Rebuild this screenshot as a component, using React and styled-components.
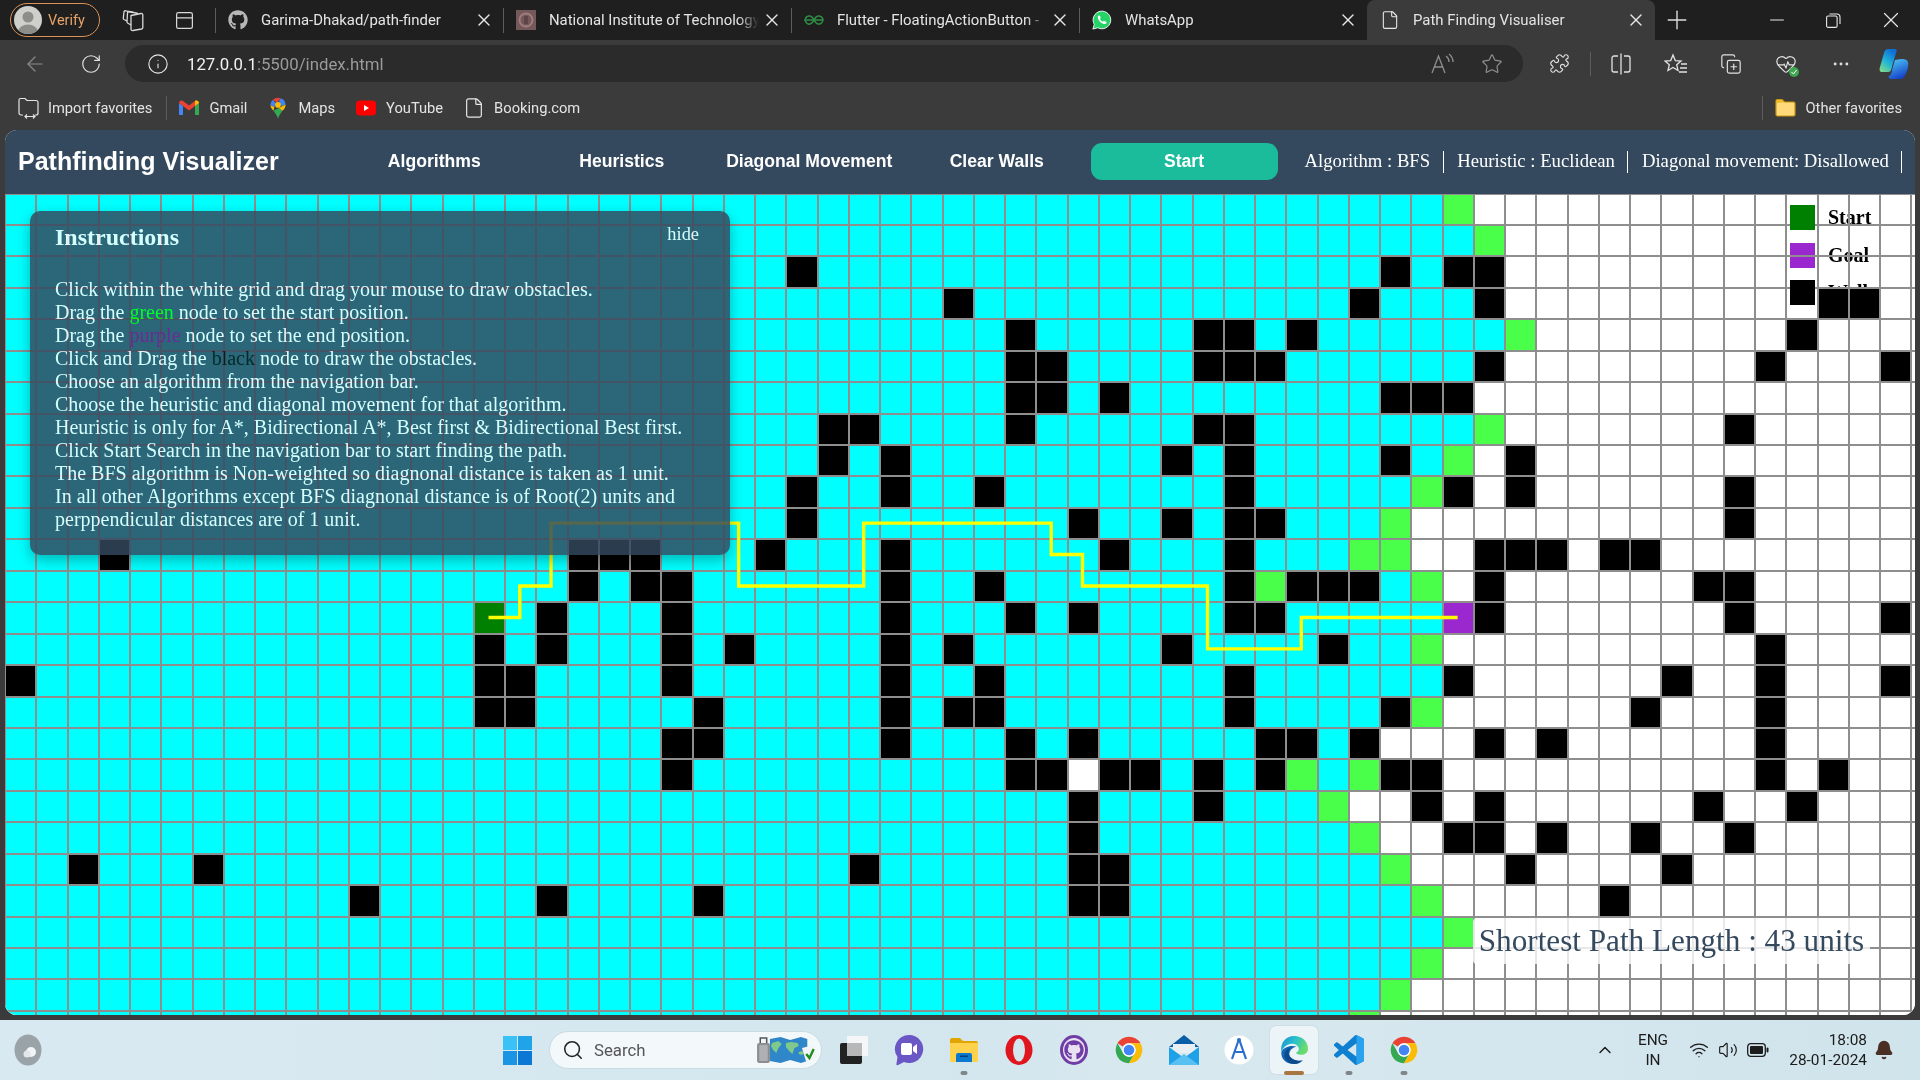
import React from "react";
import styled, { createGlobalStyle } from "styled-components";
import { FaGithub } from "react-icons/fa";
import {
  X, Plus, Minus, ArrowLeft, RotateCw, Info as InfoIcon, Star, Puzzle,
  Ellipsis, File, Search, ChevronUp, Wifi, Volume2, Bell, PanelTop, HeartPulse, CopyPlus,
} from "lucide-react";

const COL_W = 31.26;
const ROW_H = 31.44;

const WALLS = {
  2: [25, 44, 46, 47],
  3: [30, 43, 47, 58, 59],
  4: [32, 38, 39, 41, 57],
  5: [32, 33, 38, 39, 40, 47, 56, 60],
  6: [32, 33, 35, 44, 45, 46],
  7: [26, 27, 32, 38, 39, 55],
  8: [26, 28, 37, 39, 44, 48],
  9: [25, 28, 31, 39, 46, 48, 55],
  10: [25, 34, 37, 39, 40, 55],
  11: [3, 18, 19, 20, 24, 28, 35, 39, 47, 48, 49, 51, 52],
  12: [18, 20, 21, 28, 31, 39, 41, 42, 43, 47, 54, 55],
  13: [17, 21, 28, 32, 34, 39, 40, 47, 55, 60],
  14: [15, 17, 21, 23, 28, 30, 37, 42, 56],
  15: [0, 15, 16, 21, 28, 31, 39, 46, 53, 56, 60],
  16: [15, 16, 22, 28, 30, 31, 39, 44, 52, 56],
  17: [21, 22, 28, 32, 34, 40, 41, 43, 47, 49, 56],
  18: [21, 32, 33, 35, 36, 38, 40, 44, 45, 56, 58],
  19: [34, 38, 45, 47, 54, 57],
  20: [34, 46, 47, 49, 52, 55],
  21: [2, 6, 27, 34, 35, 48, 53],
  22: [11, 17, 22, 34, 35, 51],
};
const FRONTIER = {
  0: [46], 1: [47], 4: [48], 7: [47], 8: [46], 9: [45], 10: [44], 11: [43, 44], 12: [40, 45], 14: [45], 16: [45],
  18: [41, 43], 19: [42], 20: [43], 21: [44], 22: [45], 23: [46], 24: [45], 25: [44], 26: [43],
};
const WHITE_FROM = [47, 48, 48, 48, 49, 48, 47, 48, 47, 47, 45, 45, 46, 47, 46, 46, 46, 44, 46, 43, 44, 45, 46, 47, 46, 45, 44];

const kindOf = (r, c) => {
  if (r === 13 && c === 15) return "start";
  if (r === 13 && c === 46) return "goal";
  if ((WALLS[r] || []).includes(c)) return "wall";
  if ((FRONTIER[r] || []).includes(c)) return "frontier";
  if (r === 18 && c === 34) return "empty";
  return c >= WHITE_FROM[r] ? "empty" : "visited";
};
const CELLS = [];
for (let r = 0; r < 27; r++) for (let c = 0; c < 62; c++) CELLS.push({ id: `${r}-${c}`, kind: kindOf(r, c) });

const ROUTE = [[15,13],[16,13],[16,12],[17,12],[17,10],[23,10],[23,12],[27,12],[27,10],[33,10],[33,11],[34,11],[34,12],[38,12],[38,14],[41,14],[41,13],[46,13]];
const ROUTE_POINTS = ROUTE.map(([c, r]) => `${(c + 0.5) * COL_W - 1},${(r + 0.5) * ROW_H - 1}`).join(" ");

const CELL_BG = { visited: "#00ffff", frontier: "#4aff4a", wall: "#000", start: "#008000", goal: "#9b27cf", empty: "transparent" };

const Global = createGlobalStyle`
  html, body { margin: 0; padding: 0; width: 100%; height: 100%; overflow: hidden; background: #3b3b3b; }
  * { box-sizing: border-box; }
`;

const Shell = styled.div`
  width: 1920px; height: 1080px; display: flex; flex-direction: column; overflow: hidden;
  font-family: Roboto, "Noto Sans", sans-serif; background: #3b3b3b; filter: blur(0.3px);
`;

/* ---------- tab strip ---------- */
const TabStrip = styled.div`display: flex; height: 40px; background: #1f1f1f; align-items: stretch; flex: none;`;
const VerifyPill = styled.div`
  margin: 3px 0 3px 10px; width: 90px; height: 34px; border: 1px solid #d8935a; border-radius: 17px;
  display: flex; align-items: center; gap: 6px; padding-left: 3px; color: #e6a268; font-size: 14.5px;
`;
const Avatar = styled.div`
  width: 28px; height: 28px; border-radius: 50%; background: #cfcfcb; overflow: hidden; flex: none; display: flex;
`;
const StripButton = styled.div`
  width: 52px; display: flex; align-items: center; justify-content: center; color: #d8d8d8; flex: none;
  margin-left: ${(p) => p.$ml || 0}px;
`;
const Tab = styled.div`
  width: 288px; flex: none; display: flex; align-items: center; padding-left: 13px; position: relative;
  color: #e4e4e4; font-size: 14.9px;
  margin-left: ${(p) => p.$ml || 0}px;
  background: ${(p) => (p.$active ? "#3b3b3b" : "transparent")};
  border-radius: ${(p) => (p.$active ? "8px 8px 0 0" : "0")};
  &::before {
    content: ""; position: absolute; left: 0; top: 8px; bottom: 7px; width: 1px;
    background: ${(p) => (p.$active ? "transparent" : "#5c5c5c")};
  }
`;
const TabIcon = styled.div`width: 20px; height: 20px; display: flex; align-items: center; justify-content: center; flex: none;`;
const TabTitle = styled.div`
  margin-left: 13px; flex: 1; min-width: 0; white-space: nowrap; overflow: hidden;
  ${(p) => p.$fade && "mask-image: linear-gradient(90deg, #000 90%, transparent 100%);"}
`;
const TabClose = styled.div`
  width: 20px; margin: 0 9px 0 3px; display: flex; justify-content: center; color: #e8e8e8; flex: none;
`;
const NewTab = styled.div`width: 44px; display: flex; align-items: center; justify-content: center; color: #e0e0e0;`;
const WindowControls = styled.div`display: flex; margin-left: auto; padding-right: 1px;`;
const WindowButton = styled.div`width: 57px; display: flex; align-items: center; justify-content: center; color: #e8e8e8;`;

/* ---------- toolbar ---------- */
const Toolbar = styled.div`height: 42px; flex: none; display: flex; align-items: center; padding-left: 7px; background: #3b3b3b; padding-top: 5px;`;
const ToolSlot = styled.div`
  width: ${(p) => p.$w || 55}px; height: 37px; display: flex; align-items: center; justify-content: center;
  flex: none; color: ${(p) => p.$color || "#e2e2e2"};
`;
const AddressBar = styled.div`
  width: 1398.5px; height: 37px; margin: 0 9px 0 6.5px; border-radius: 19px; background: #2b2b2b; flex: none;
  display: flex; align-items: center; padding-left: 22px;
`;
const UrlInfo = styled.div`width: 22px; color: #e8e8e8; display: flex; justify-content: center; flex: none;`;
const UrlText = styled.div`margin-left: 18.5px; font-size: 16.8px; color: #9b9b9b; white-space: nowrap;`;
const UrlHost = styled.span`color: #f2f2f2;`;
const UrlActions = styled.div`margin-left: auto; display: flex; padding-right: 6px; color: #8f8f8f;`;
const UrlAction = styled.div`width: 50px; display: flex; justify-content: center;`;
const ToolDivider = styled.div`width: 1px; height: 24px; background: #5c5c5c; margin: 0 2px 0 3px; flex: none;`;

/* ---------- favorites ---------- */
const Favorites = styled.div`
  height: 48px; flex: none; display: flex; align-items: center; padding: 4px 18px 0 17px; background: #3b3b3b;
  font-size: 14.7px; color: #e4e4e4;
`;
const FavItem = styled.div`
  display: flex; align-items: center; gap: 9px; margin-right: 20px; white-space: nowrap;
  &:last-child { margin-right: 0; }
`;
const FavIcon = styled.div`width: 22px; height: 22px; flex: none; display: flex; align-items: center; justify-content: center;`;
const FavDivider = styled.div`width: 1px; height: 24px; background: #5c5c5c; margin: 0 11px 0 -6px; flex: none;`;
const FavRight = styled.div`margin-left: auto; display: flex; align-items: center;`;

/* ---------- page ---------- */
const PageFrame = styled.div`flex: 1; min-height: 0; padding: 0 5px 5px;`;
const Page = styled.div`
  width: 1910px; height: 885px; border-radius: 12px; overflow: hidden; background: #fff;
  display: flex; flex-direction: column; font-family: "Liberation Serif", serif;
`;
const NavBar = styled.nav`
  height: 63.5px; flex: none; display: flex; align-items: center; background: #34495e; color: #fff;
`;
const Brand = styled.div`
  width: 335.5px; padding-left: 13px; flex: none; font: bold 25px "Liberation Sans", sans-serif; padding-bottom: 1px;
`;
const NavLink = styled.div`
  width: 187.5px; flex: none; text-align: center; font: bold 17.6px "Liberation Sans", sans-serif;
`;
const StartButton = styled.div`
  width: 187px; height: 37px; flex: none; border-radius: 11px; background: #1abc9c; color: #fff;
  display: flex; align-items: center; justify-content: center; font: bold 17.6px "Liberation Sans", sans-serif;
`;
const InfoRow = styled.div`display: flex; margin-left: 27px; font-size: 18.7px; white-space: nowrap;`;
const InfoItem = styled.div`
  height: 22px; line-height: 20px; padding-right: 12.5px; margin-right: 13.5px; border-right: 1px solid #fff;
`;

const GridArea = styled.div`position: relative; flex: 1; min-height: 0; overflow: hidden; background: #fff;`;
const Grid = styled.div`
  position: relative; z-index: 1; display: grid;
  grid-template-columns: repeat(62, ${COL_W}px);
  grid-template-rows: repeat(27, ${ROW_H}px);
`;
const Cell = styled.div`
  border: 1px solid #8e8e8e; background: ${(p) => CELL_BG[p.$kind]};
`;
const Route = styled.svg`
  position: absolute; left: 0; top: 0; width: 100%; height: 100%; z-index: 2; pointer-events: none;
`;

const Legend = styled.div`
  position: absolute; left: 1785px; top: 11.5px; width: 110px; display: flex; flex-direction: column; gap: 12.5px;
`;
const LegendRow = styled.div`display: flex; align-items: center; gap: 13px; font-weight: bold; font-size: 20px; color: #000;`;
const Swatch = styled.div`
  width: 25px; height: 25px; flex: none; background: ${(p) => p.$color};
  ${(p) => p.$over && "position: relative; z-index: 2;"}
`;

const Panel = styled.section`
  position: absolute; left: 25px; top: 17.5px; width: 700px; height: 344px; z-index: 3; opacity: 0.83;
  background: #34495e; color: #fff; border-radius: 10px; padding: 12px 31px 0 25px;
  box-shadow: 0 5px 14px rgba(0, 0, 0, 0.35); font-size: 20px;
`;
const PanelHead = styled.div`display: flex; justify-content: space-between; height: 28px;`;
const PanelTitle = styled.div`font-size: 24px; font-weight: bold; line-height: 28px;`;
const HideLink = styled.div`line-height: 22px; font-size: 18.4px;`;
const PanelBody = styled.div`margin-top: 26.5px; line-height: 23px; width: 640px;`;
const Tint = styled.span`color: ${(p) => p.$color};`;

const Shortest = styled.div`
  position: absolute; left: 1468px; top: 724.5px; width: 397px; height: 46px; z-index: 3; border-radius: 4px;
  background: rgba(255, 255, 255, 0.8); color: #34495e; font-size: 31.2px;
  display: flex; align-items: center; justify-content: center; white-space: nowrap;
`;

/* ---------- taskbar ---------- */
const Taskbar = styled.div`
  height: 60px; flex: none; display: flex; align-items: stretch; color: #1c1c1c; padding-left: 0.5px;
  background: linear-gradient(90deg, #d9e9f1 0%, #d3e6ee 50%, #d8e8ef 60%, #d0e4ec 100%);
`;
const AppSlot = styled.div`
  width: 55px; flex: none; position: relative; display: flex; align-items: center; justify-content: center;
  margin-left: ${(p) => p.$ml || 0}px;
`;
const AppHighlight = styled.div`
  position: absolute; left: 3.5px; top: 6px; width: 48px; height: 48px; border-radius: 6px; background: #ecf4f8;
  box-shadow: 0 0 2px rgba(0, 0, 0, 0.12);
`;
const AppIcon = styled.div`position: relative; display: flex; width: 32px; height: 32px; align-items: center; justify-content: center;`;
const AppDot = styled.div`
  position: absolute; left: 50%; bottom: 5px; transform: translateX(-50%); height: 4px; border-radius: 2px;
  width: ${(p) => (p.$active ? 20 : 7)}px; background: ${(p) => (p.$active ? "#a8763f" : "#7f8589")};
`;
const SearchBox = styled.div`
  width: 273px; height: 38.5px; margin: 10.5px 4.5px 0 4px; flex: none; border-radius: 20px; background: #f3f8fb;
  border: 1px solid #c9dbe3; display: flex; align-items: center; padding: 0 3px 0 12px; font-size: 16.8px; color: #555;
`;
const SearchLabel = styled.div`margin-left: 10px; flex: 1;`;
const Tray = styled.div`margin-left: auto; margin-right: 20px; display: flex; align-items: center; font-size: 15.4px;`;
const TraySlot = styled.div`
  width: ${(p) => p.$w}px; display: flex; justify-content: center; align-items: center; flex: none;
`;
const Lang = styled.div`width: 60px; text-align: center; line-height: 20px; flex: none;`;
const Clock = styled.div`width: 93px; text-align: right; line-height: 20px; flex: none;`;

/* ---------- drawn logos ---------- */
const Chrome = ({ size = 32 }) => (
  <svg width={size} height={size} viewBox="0 0 48 48">
    <path fill="#ea4335" d="M24 4A20 20 0 0 1 41.32 14H24A10 10 0 0 0 15.34 19L6.68 14A20 20 0 0 1 24 4Z" />
    <path fill="#34a853" d="M6.68 14A20 20 0 0 0 24 44L32.66 29A10 10 0 0 1 15.34 29Z" />
    <path fill="#fbbc05" d="M41.32 14A20 20 0 0 1 24 44L32.66 29A10 10 0 0 0 24 14Z" />
    <circle cx="24" cy="24" r="10" fill="#fff" />
    <circle cx="24" cy="24" r="8" fill="#4285f4" />
  </svg>
);
const Edge = () => (
  <svg width="32" height="32" viewBox="0 0 48 48">
    <defs>
      <linearGradient id="edgeA" x1="0" y1="0" x2="1" y2="0.4">
        <stop offset="0" stopColor="#1b8fd8" />
        <stop offset="0.55" stopColor="#2cc3c9" />
        <stop offset="1" stopColor="#6bdc6a" />
      </linearGradient>
    </defs>
    <path fill="url(#edgeA)" d="M24 3c12 0 21 8 21 19 0 6-5 9-10 9-4 0-7-1-8-3 3-1 5-4 4-7-2-5-7-7-12-6C12 16 7 21 5 27 3 13 12 3 24 3Z" />
    <path fill="#1266b5" d="M5 27c-1 11 8 18 19 18 5 0 10-2 13-5-6 3-13 2-17-3-5-5-3-12 1-15 2-2 5-3 7-3-9-3-20 1-23 8Z" />
    <path fill="#0b4a8c" d="M19 20c-4 5-4 11 0 15 5 5 12 6 18 4-4 4-8 6-13 6-6 0-12-4-14-10-2-6 3-13 9-15Z" />
  </svg>
);
const VsCode = () => (
  <svg width="30" height="30" viewBox="0 0 24 24">
    <path fill="#0f7fcf" d="M23.15 2.587L18.21.21a1.494 1.494 0 0 0-1.705.29l-9.46 8.63-4.12-3.128a.999.999 0 0 0-1.276.057L.327 7.261A1 1 0 0 0 .326 8.74L3.899 12 .326 15.26a1 1 0 0 0 .001 1.479L1.65 17.94a.999.999 0 0 0 1.276.057l4.12-3.128 9.46 8.63a1.492 1.492 0 0 0 1.704.29l4.942-2.377A1.5 1.5 0 0 0 24 20.06V3.939a1.5 1.5 0 0 0-.85-1.352zm-5.146 14.861L10.826 12l7.178-5.448v10.896z" />
    <path fill="#2aa3ee" d="M18 .35c.1 0 .15-.1.21-.14l4.94 2.377A1.5 1.5 0 0 1 24 3.94v16.12a1.5 1.5 0 0 1-.85 1.352l-4.94 2.377a1.5 1.5 0 0 1-.21.08V17.45V6.55Z" />
  </svg>
);
const Folder = () => (
  <svg width="30" height="30" viewBox="0 0 30 30">
    <path fill="#e0a500" d="M1 5a2 2 0 0 1 2-2h8l3 3h13a2 2 0 0 1 2 2v3H1Z" />
    <path fill="#ffd24d" d="M1 8h28v18a1 1 0 0 1-1 1H2a1 1 0 0 1-1-1Z" />
    <path fill="#0a7ad1" d="M7 20a2 2 0 0 1 2-2h12a2 2 0 0 1 2 2v7H7Z" />
    <rect x="11" y="20.5" width="8" height="1.5" fill="#073f7a" />
  </svg>
);
const FavFolder = () => (
  <svg width="21" height="20" viewBox="0 0 21 20">
    <path fill="#ffd97a" stroke="#c8960c" strokeWidth="1.200" d="M1 3a1.500 1.500 0 0 1 1.500-1.500H7L9.500 4h9A1.500 1.500 0 0 1 20 5.500v11a1.500 1.500 0 0 1-1.500 1.500h-16A1.500 1.500 0 0 1 1 16.500Z" />
    <path fill="#f0b71f" d="M1.600 2.200H7L9 4.300l-7.400.6Z" />
  </svg>
);
const MapArt = () => (
  <svg width="62" height="32" viewBox="0 0 58 32" preserveAspectRatio="none">
    <rect x="1" y="9" width="12" height="20" rx="2" fill="#8b8d8f" />
    <rect x="3" y="11" width="8" height="16" rx="1" fill="#aeb0b2" />
    <path d="M4 9V4h6v5" fill="none" stroke="#555" strokeWidth="1.4" />
    <path fill="#2f86c9" d="M13 5l10-2 9 3 10-3 6 2v22l-6 2-10-3-9 3-10-2Z" />
    <path fill="#7fc98a" d="M15 9l6-2 3 3-3 4-2 5-3-3-2-4ZM28 9l5-1 6 1 1 3-4 2-2 6-3-3-3-4ZM40 18l3-1 2 2-2 2-3-1Z" />
    <path fill="#f3f4f7" d="M43 14l11-3 3 13-10 4Z" />
    <path d="M47 20l3 4 4-9" fill="none" stroke="#1d8f1d" strokeWidth="2.2" />
  </svg>
);
const GmailMark = () => (
  <svg width="20" height="16" viewBox="0 0 20 16">
    <path fill="#4285f4" d="M0 3v12h4V6Z" />
    <path fill="#34a853" d="M16 6v9h4V3Z" />
    <path fill="#ea4335" d="M0 3c0-2 2.5-3 4-2l6 4.5L16 1c1.500-1 4 0 4 2l-4 3-6 4.500L4 6Z" />
    <path fill="#fbbc05" d="M16 1c1.500-1 4 0 4 2l-4 3Z" />
  </svg>
);
const MapsMark = () => (
  <svg width="16" height="24" viewBox="0 0 18 24">
    <path fill="#34a853" d="M4 15c2 3 4 5 5 9 1-4 3-6 5-9l-4-3Z" />
    <path fill="#ea4335" d="M3 3a8.600 8.600 0 0 1 9-2L8 6Z" />
    <path fill="#4285f4" d="M12 1a8.600 8.600 0 0 1 5.500 7L13 10l-3-5Z" />
    <path fill="#fbbc05" d="M17.500 8c.3 3-1.500 5-3.500 7l-4-3Z" />
    <path fill="#fbbc05" d="M.5 8.500 5 11l-1 4C2 13 .5 11 .5 8.500Z" />
    <path fill="#4285f4" d="M3 3l4 4-2 4-4.500-2.500C.5 6.500 1.500 4.500 3 3Z" />
    <circle cx="9" cy="8.500" r="3.200" fill="#fbbc05" />
  </svg>
);
const YouTubeMark = () => (
  <svg width="20" height="16" viewBox="0 0 20 16">
    <rect width="20" height="15" y="0.5" rx="4" fill="#f00" />
    <path fill="#fff" d="M8 5v6l5-3Z" />
  </svg>
);
const Copilot = () => (
  <svg width="30" height="32" viewBox="0 0 30 32">
    <defs>
      <linearGradient id="cpA" x1="0" y1="1" x2="0.6" y2="0">
        <stop offset="0" stopColor="#8ee07a" />
        <stop offset="0.5" stopColor="#23b5d6" />
        <stop offset="1" stopColor="#0e6fd8" />
      </linearGradient>
      <linearGradient id="cpB" x1="0.2" y1="0" x2="0.6" y2="1">
        <stop offset="0" stopColor="#4ec3f5" />
        <stop offset="1" stopColor="#1340c8" />
      </linearGradient>
    </defs>
    <path fill="url(#cpA)" d="M9 1h7c2 0 2 2 1 4l-5 17c-1 2-2 2-4 2H3c-2 0-3-2-2-5L5 5c1-3 2-4 4-4Z" />
    <path fill="url(#cpB)" d="M16 12l6-1c3 0 6 0 7 3 1 4-1 10-3 13-1 3-3 4-5 4h-9c-2 0-3-2-2-3 2-1 3-4 3-6Z" />
  </svg>
);
const WorkspaceIcon = () => (
  <svg width="22" height="24" viewBox="0 0 22 24" fill="none" stroke="currentColor" strokeWidth="1.300" strokeLinejoin="round">
    <path d="M9 7.500l10-2a1.500 1.500 0 0 1 1.800 1.500v12.500a1.500 1.500 0 0 1-1.200 1.500L11 22.500a1.500 1.500 0 0 1-2-1.500Z" />
    <path d="M9 17L5.500 15a1.500 1.500 0 0 1-.5-1.300L5.500 5c0-1 .8-1.500 1.600-1.500L16 5.500" />
    <path d="M5 13L2 11.500a1.400 1.400 0 0 1-.7-1.400L2 4c.2-1 1-1.500 1.800-1.200L11 4.500" />
  </svg>
);
const RestoreIcon = () => (
  <svg width="15" height="15" viewBox="0 0 15 15" fill="none" stroke="currentColor" strokeWidth="1.100">
    <rect x="0.600" y="3" width="10.500" height="11.400" rx="1.500" />
    <path d="M3.500 1h7.500a3 3 0 0 1 3 3v7" />
  </svg>
);
const ReadAloud = () => (
  <svg width="24" height="22" viewBox="0 0 24 22" fill="none" stroke="currentColor" strokeWidth="1.300">
    <path d="M2 20L8.500 3 15 20M4.500 14h8M16 3c2 1.500 3 3.500 3 6M19 1c2.500 2 4 5 4 8" />
  </svg>
);
const SplitIcon = () => (
  <svg width="22" height="24" viewBox="0 0 22 24" fill="none" stroke="currentColor" strokeWidth="1.300">
    <path d="M8 4H4a2 2 0 0 0-2 2v12a2 2 0 0 0 2 2h4M14 4h4a2 2 0 0 1 2 2v12a2 2 0 0 1-2 2h-4M11 1.500v21" />
  </svg>
);
const FavoritesIcon = () => (
  <svg width="24" height="24" viewBox="0 0 24 24" fill="none" stroke="currentColor" strokeWidth="1.300">
    <path d="M9 3l2.300 5.600 5.700.4-4.300 3.700 1.300 5.800-5-3-5 3 1.300-5.800L1 9l5.700-.4ZM17 12h6M16 16h7M15 20h8" />
  </svg>
);
const ImportIcon = () => (
  <svg width="21" height="22" viewBox="0 0 21 22" fill="none" stroke="currentColor" strokeWidth="1.200">
    <path d="M5 18H3a2 2 0 0 1-2-2V3a1.500 1.500 0 0 1 1.500-1.500H7L9 3.500h9a2 2 0 0 1 2 2V16a2 2 0 0 1-2 2h-1" />
    <path d="M7 19.500h10M9 17.500l-2 2 2 2M15 17.500l2 2-2 2" />
  </svg>
);
const BatteryIcon = () => (
  <svg width="22" height="14" viewBox="0 0 22 14">
    <rect x="0.700" y="0.700" width="17.600" height="12.600" rx="3" fill="none" stroke="#1c1c1c" strokeWidth="1.300" />
    <rect x="3" y="3" width="13" height="8" rx="1" fill="#1c1c1c" />
    <rect x="19.500" y="4.500" width="2" height="5" rx="1" fill="#1c1c1c" />
  </svg>
);
const NitBadge = () => (
  <svg width="20" height="20" viewBox="0 0 20 20">
    <rect width="20" height="20" fill="#75585a" />
    <circle cx="10" cy="10" r="6.500" fill="none" stroke="#a07c7c" strokeWidth="2" />
    <rect x="8" y="6" width="4" height="8" fill="#5e4446" />
  </svg>
);
const GfgMark = () => (
  <svg width="20" height="12" viewBox="0 0 20 12" fill="none" stroke="#2f8d46" strokeWidth="1.500">
    <path d="M10 6H1c.5-3 3-4.500 5-4 2 .3 3 2 4 4 1 2 2 3.700 4 4 2 .5 4.500-1 5-4h-9" />
    <path d="M10 6c-1 2-2 3.700-4 4-2 .5-4-1-5-4M10 6c1-2 2-3.700 4-4 2-.5 4.500 1 5 4" />
  </svg>
);
const WhatsMark = () => (
  <svg width="22" height="22" viewBox="0 0 22 22">
    <path fill="#25d366" stroke="#fff" strokeWidth="1" d="M1 21l1.500-5.200A9.700 9.700 0 1 1 6.300 19.500Z" />
    <path fill="#fff" d="M7.500 6c-1 .7-1.500 2-.8 3.700 1 2.600 3.300 4.800 5.900 5.600 1.800.5 3-.3 3.400-1.400.1-.5-.1-.8-.5-1l-1.900-.9c-.4-.2-.6-.1-.9.2l-.6.8c-1.500-.6-2.600-1.700-3.300-3.100l.6-.7c.2-.3.3-.5.100-.9l-.7-1.800c-.2-.5-.8-.7-1.300-.5Z" />
  </svg>
);

const TABS = [
  { title: "Garima-Dhakad/path-finder", ml: 4.5, icon: <FaGithub size={20} color="#b6b6b6" /> },
  { title: "National Institute of Technology", fade: true, icon: <NitBadge /> },
  { title: "Flutter - FloatingActionButton -", fade: true, icon: <GfgMark /> },
  { title: "WhatsApp", icon: <WhatsMark /> },
];

const FAVS = [
  { label: "Gmail", icon: <GmailMark /> },
  { label: "Maps", icon: <MapsMark /> },
  { label: "YouTube", icon: <YouTubeMark /> },
  { label: "Booking.com", icon: <File size={22} strokeWidth={1.3} color="#e8e8e8" /> },
];

const INSTRUCTIONS = [
  <>Click within the white grid and drag your mouse to draw obstacles.</>,
  <>Drag the <Tint $color="#00ff00">green</Tint> node to set the start position.</>,
  <>Drag the <Tint $color="purple">purple</Tint> node to set the end position.</>,
  <>Click and Drag the <Tint $color="#000">black</Tint> node to draw the obstacles.</>,
  <>Choose an algorithm from the navigation bar.</>,
  <>Choose the heuristic and diagonal movement for that algorithm.</>,
  <>Heuristic is only for A*, Bidirectional A*, Best first &amp; Bidirectional Best first.</>,
  <>Click Start Search in the navigation bar to start finding the path.</>,
  <>The BFS algorithm is Non-weighted so diagnonal distance is taken as 1 unit.</>,
  <>In all other Algorithms except BFS diagnonal distance is of Root(2) units and perppendicular distances are of 1 unit.</>,
];

const APPS = [
  { id: "task", icon: (
    <svg width="30" height="30" viewBox="0 0 30 30">
      <rect x="1" y="8" width="22" height="21" rx="2" fill="#222" />
      <rect x="8" y="1" width="21" height="20" rx="1" fill="#f4f6f7" />
      <rect x="8" y="8" width="15" height="13" fill="#b8b8b8" />
    </svg>
  ) },
  { id: "meet", icon: (
    <svg width="30" height="32" viewBox="0 0 30 32">
      <path fill="#6a56c4" d="M15 1a14 14 0 1 1-5 27l-6 3c-1 .5-2 0-1.500-1.500L3.500 23A14 14 0 0 1 15 1Z" />
      <rect x="7" y="9" width="11" height="12" rx="2" fill="#fff" />
      <path fill="#fff" d="M19 13l4-3v10l-4-3Z" />
    </svg>
  ) },
  { id: "files", dot: true, icon: <Folder /> },
  { id: "opera", icon: (
    <svg width="30" height="32" viewBox="0 0 30 32">
      <ellipse cx="15" cy="16" rx="13.500" ry="15" fill="#e0161e" />
      <ellipse cx="15" cy="16" rx="6" ry="11.500" fill="#d3e6ee" />
    </svg>
  ) },
  { id: "hub", icon: (
    <svg width="30" height="32" viewBox="0 0 30 32">
      <ellipse cx="15" cy="16" rx="14" ry="15" fill="#6f3da5" />
      <ellipse cx="15" cy="16" rx="11" ry="12" fill="#e9e2f2" />
      <foreignObject x="5" y="6" width="20" height="20"><FaGithub size={20} color="#6f3da5" /></foreignObject>
    </svg>
  ) },
  { id: "chrome1", icon: <Chrome /> },
  { id: "mail", icon: (
    <svg width="30" height="32" viewBox="0 0 30 32">
      <path fill="#0a5ea8" d="M15 1L0 13h30Z" />
      <path fill="#e9eef2" d="M4 10h22v9H4Z" />
      <path fill="#1ea1e6" d="M0 13l15 11 15-11v18H0Z" />
      <path fill="#58c1f2" d="M0 31l15-11 15 11Z" />
    </svg>
  ) },
  { id: "studio", icon: (
    <svg width="30" height="32" viewBox="0 0 30 32">
      <circle cx="15" cy="16" r="14.500" fill="#fff" />
      <path d="M15 5L8 25M15 5l7 20M10 18h10" fill="none" stroke="#2a6fd0" strokeWidth="2.200" />
      <circle cx="15" cy="6" r="2" fill="#2a6fd0" />
    </svg>
  ) },
  { id: "edge", active: true, icon: <Edge /> },
  { id: "code", dot: true, icon: <VsCode /> },
  { id: "chrome2", dot: true, icon: <Chrome /> },
];

export default function App() {
  return (
    <Shell>
      <Global />
      <TabStrip>
        <VerifyPill>
          <Avatar>
            <svg width="28" height="28" viewBox="0 0 28 28">
              <circle cx="14" cy="11" r="5.500" fill="#8d8d89" />
              <ellipse cx="14" cy="26" rx="10" ry="7.500" fill="#8d8d89" />
            </svg>
          </Avatar>
          Verify
        </VerifyPill>
        <StripButton $ml={6.5}><WorkspaceIcon /></StripButton>
        <StripButton><PanelTop size={21} strokeWidth={1.4} /></StripButton>
        {TABS.map((t) => (
          <Tab key={t.title} $ml={t.ml}>
            <TabIcon>{t.icon}</TabIcon>
            <TabTitle $fade={t.fade}>{t.title}</TabTitle>
            <TabClose><X size={20} strokeWidth={1.6} /></TabClose>
          </Tab>
        ))}
        <Tab $active>
          <TabIcon><File size={20} strokeWidth={1.3} color="#e8e8e8" /></TabIcon>
          <TabTitle>Path Finding Visualiser</TabTitle>
          <TabClose><X size={20} strokeWidth={1.6} /></TabClose>
        </Tab>
        <NewTab><Plus size={30} strokeWidth={1.1} /></NewTab>
        <WindowControls>
          <WindowButton><Minus size={22} strokeWidth={1.2} /></WindowButton>
          <WindowButton><RestoreIcon /></WindowButton>
          <WindowButton><X size={26} strokeWidth={1.1} /></WindowButton>
        </WindowControls>
      </TabStrip>

      <Toolbar>
        <ToolSlot $w={56} $color="#8b8b8b"><ArrowLeft size={24} strokeWidth={1.2} /></ToolSlot>
        <ToolSlot $w={55}><RotateCw size={22} strokeWidth={1.3} /></ToolSlot>
        <AddressBar>
          <UrlInfo><InfoIcon size={22} strokeWidth={1.2} /></UrlInfo>
          <UrlText><UrlHost>127.0.0.1</UrlHost>:5500/index.html</UrlText>
          <UrlActions>
            <UrlAction><ReadAloud /></UrlAction>
            <UrlAction><Star size={22} strokeWidth={1.3} /></UrlAction>
          </UrlActions>
        </AddressBar>
        <ToolSlot><Puzzle size={21} strokeWidth={1.3} /></ToolSlot>
        <ToolDivider />
        <ToolSlot><SplitIcon /></ToolSlot>
        <ToolSlot><FavoritesIcon /></ToolSlot>
        <ToolSlot><CopyPlus size={22} strokeWidth={1.3} /></ToolSlot>
        <ToolSlot>
          <div style={{ position: "relative", display: "flex" }}>
            <HeartPulse size={22} strokeWidth={1.3} />
            <svg width="10" height="10" viewBox="0 0 10 10" style={{ position: "absolute", right: -2, bottom: -2 }}>
              <circle cx="5" cy="5" r="5" fill="#3fa652" />
              <path d="M2.500 5l2 2 3-4" fill="none" stroke="#fff" strokeWidth="1" />
            </svg>
          </div>
        </ToolSlot>
        <ToolSlot><Ellipsis size={20} strokeWidth={1.5} /></ToolSlot>
        <ToolSlot $w={52}><Copilot /></ToolSlot>
      </Toolbar>

      <Favorites>
        <FavItem>
          <FavIcon><ImportIcon /></FavIcon>
          Import favorites
        </FavItem>
        <FavDivider />
        {FAVS.map((f) => (
          <FavItem key={f.label}><FavIcon>{f.icon}</FavIcon>{f.label}</FavItem>
        ))}
        <FavRight>
          <FavDivider />
          <FavItem><FavIcon><FavFolder /></FavIcon>Other favorites</FavItem>
        </FavRight>
      </Favorites>

      <PageFrame>
        <Page>
          <NavBar>
            <Brand>Pathfinding Visualizer</Brand>
            <NavLink>Algorithms</NavLink>
            <NavLink>Heuristics</NavLink>
            <NavLink>Diagonal Movement</NavLink>
            <NavLink>Clear Walls</NavLink>
            <StartButton>Start</StartButton>
            <InfoRow>
              <InfoItem>Algorithm : BFS</InfoItem>
              <InfoItem>Heuristic : Euclidean</InfoItem>
              <InfoItem>Diagonal movement: Disallowed</InfoItem>
            </InfoRow>
          </NavBar>
          <GridArea>
            <Legend>
              <LegendRow><Swatch $color="#008000" $over />Start</LegendRow>
              <LegendRow><Swatch $color="#9b27cf" />Goal</LegendRow>
              <LegendRow><Swatch $color="#000" $over />Wall</LegendRow>
            </Legend>
            <Grid>
              {CELLS.map((c) => <Cell key={c.id} $kind={c.kind} />)}
            </Grid>
            <Route>
              <polyline points={ROUTE_POINTS} fill="none" stroke="#ffff00" strokeWidth="3.4" strokeLinejoin="miter" />
            </Route>
            <Panel>
              <PanelHead>
                <PanelTitle>Instructions</PanelTitle>
                <HideLink>hide</HideLink>
              </PanelHead>
              <PanelBody>
                {INSTRUCTIONS.map((line, i) => <div key={i}>{line}</div>)}
              </PanelBody>
            </Panel>
            <Shortest>Shortest Path Length : 43 units</Shortest>
          </GridArea>
        </Page>
      </PageFrame>

      <Taskbar>
        <AppSlot>
          <svg width="28" height="32" viewBox="0 0 28 32">
            <ellipse cx="14" cy="16" rx="13.500" ry="15.500" fill="#9aa3a8" />
            <circle cx="17" cy="18" r="5" fill="#f2f4f5" />
            <circle cx="13" cy="20" r="3.500" fill="#e4e7e9" />
          </svg>
        </AppSlot>
        <AppSlot $ml={434.5}>
          <svg width="29" height="29" viewBox="0 0 29 29">
            <path fill="#3ac1f5" d="M0 0h14v14H0Z" />
            <path fill="#1fa4ea" d="M15 0h14v14H15Z" />
            <path fill="#1b95e3" d="M0 15h14v14H0Z" />
            <path fill="#0a78d4" d="M15 15h14v14H15Z" />
          </svg>
        </AppSlot>
        <SearchBox>
          <Search size={22} strokeWidth={1.7} color="#222" />
          <SearchLabel>Search</SearchLabel>
          <MapArt />
        </SearchBox>
        {APPS.map((a) => (
          <AppSlot key={a.id}>
            {a.active && <AppHighlight />}
            <AppIcon>{a.icon}</AppIcon>
            {(a.dot || a.active) && <AppDot $active={a.active} />}
          </AppSlot>
        ))}
        <Tray>
          <TraySlot $w={36}><ChevronUp size={20} strokeWidth={1.7} /></TraySlot>
          <Lang>ENG<br />IN</Lang>
          <TraySlot $w={31}><Wifi size={20} strokeWidth={1.6} /></TraySlot>
          <TraySlot $w={27}><Volume2 size={20} strokeWidth={1.4} /></TraySlot>
          <TraySlot $w={33}><BatteryIcon /></TraySlot>
          <Clock>18:08<br />28-01-2024</Clock>
          <TraySlot $w={33}><Bell size={20} fill="#4b2f25" color="#4b2f25" /></TraySlot>
        </Tray>
      </Taskbar>
    </Shell>
  );
}
